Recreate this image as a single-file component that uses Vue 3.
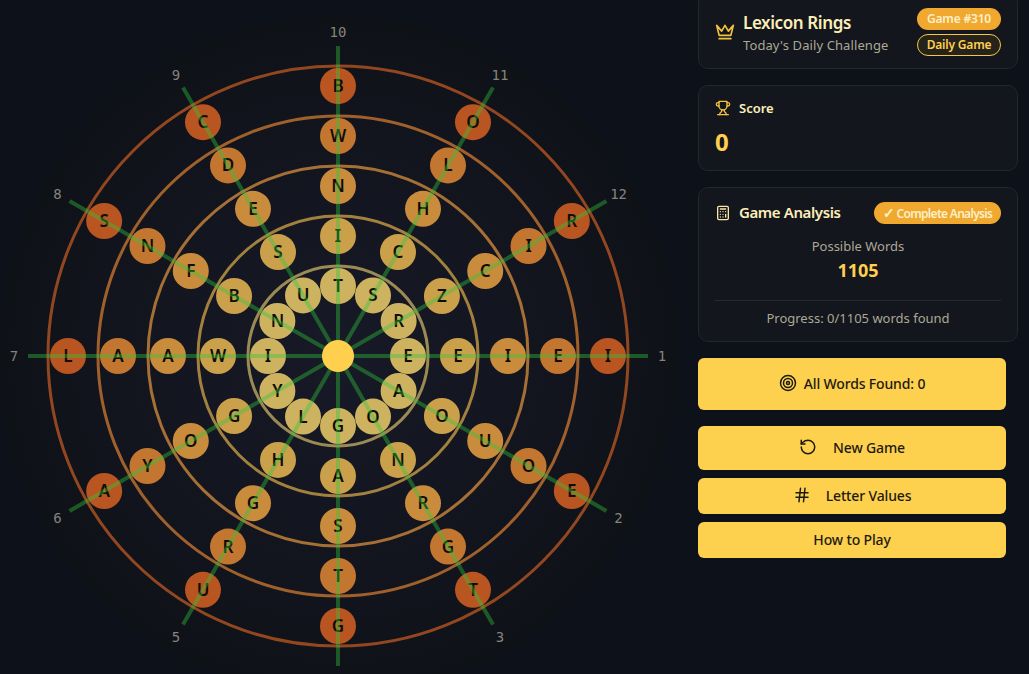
<template>
  <div class="page">
    <svg class="wheel" width="680" height="680" viewBox="-340 -340 680 680">
      <defs>
        <radialGradient id="discFill">
          <stop offset="0%" stop-color="#171a27" />
          <stop offset="75%" stop-color="#11141c" />
          <stop offset="100%" stop-color="#0e1116" />
        </radialGradient>
      </defs>
      <circle r="340" fill="url(#discFill)" />
      <circle
        v-for="ring in rings"
        :key="ring.r"
        :r="ring.r + 20"
        fill="none"
        :stroke="ring.stroke"
        stroke-width="3"
      />
      <g v-for="cell in cells" :key="cell.id">
        <circle :cx="cell.x" :cy="cell.y" r="18" :fill="cell.fill" />
        <text :x="cell.x" :y="cell.y + 6" class="letter" text-anchor="middle">{{ cell.ch }}</text>
      </g>
      <line
        v-for="spoke in spokes"
        :key="spoke.n"
        x1="0"
        y1="0"
        :x2="spoke.x"
        :y2="spoke.y"
        class="spoke"
      />
      <text
        v-for="spoke in labelled"
        :key="'n' + spoke.n"
        :x="spoke.lx"
        :y="spoke.ly + 5"
        class="num"
        text-anchor="middle"
      >{{ spoke.n }}</text>
      <circle r="16" fill="#ffd04d" />
    </svg>

    <div class="side">
      <div class="card head">
        <svg class="ico crown" viewBox="0 0 24 24"><path d="m2 4 3 12h14l3-12-6 7-4-7-4 7-6-7zm3 16h14" /></svg>
        <div class="head-text">
          <div class="title">Lexicon Rings</div>
          <div class="sub">Today's Daily Challenge</div>
        </div>
        <div class="badges">
          <span class="badge solid">Game #310</span>
          <span class="badge outline">Daily Game</span>
        </div>
      </div>

      <div class="card score">
        <div class="row">
          <svg class="ico small" viewBox="0 0 24 24">
            <path d="M6 9H4.5a2.5 2.5 0 0 1 0-5H6" />
            <path d="M18 9h1.5a2.5 2.5 0 0 0 0-5H18" />
            <path d="M4 22h16" />
            <path d="M10 14.66V17c0 .55-.47.98-.97 1.21C7.85 18.75 7 20.24 7 22" />
            <path d="M14 14.66V17c0 .55.47.98.97 1.21C16.15 18.75 17 20.24 17 22" />
            <path d="M18 2H6v7a6 6 0 0 0 12 0V2Z" />
          </svg>
          <span class="score-label">Score</span>
        </div>
        <div class="score-value">0</div>
      </div>

      <div class="card analysis">
        <div class="row between">
          <div class="row">
            <svg class="ico small pale" viewBox="0 0 24 24">
              <rect x="4" y="2" width="16" height="20" rx="2" />
              <path d="M8 6h8M16 14v4M16 10h.01M12 10h.01M8 10h.01M12 14h.01M8 14h.01M12 18h.01M8 18h.01" />
            </svg>
            <span class="analysis-title">Game Analysis</span>
          </div>
          <span class="badge solid wide"><b class="tick">✓</b> Complete Analysis</span>
        </div>
        <div class="possible">Possible Words</div>
        <div class="possible-num">1105</div>
        <div class="progress">Progress: 0/1105 words found</div>
      </div>

      <button class="btn found">
        <svg class="ico dark" viewBox="0 0 24 24">
          <circle cx="12" cy="12" r="10" /><circle cx="12" cy="12" r="6" /><circle cx="12" cy="12" r="2" />
        </svg>
        <span>All Words Found: 0</span>
      </button>
      <div class="actions">
        <button class="btn tall">
          <svg class="ico dark" viewBox="0 0 24 24">
            <path d="M3 12a9 9 0 1 0 9-9 9.75 9.75 0 0 0-6.74 2.74L3 8" /><path d="M3 3v5h5" />
          </svg>
          <span>New Game</span>
        </button>
        <button class="btn short">
          <svg class="ico dark" viewBox="0 0 24 24">
            <path d="M4 9h16M4 15h16M10 3 8 21M16 3l-2 18" />
          </svg>
          <span>Letter Values</span>
        </button>
        <button class="btn short">How to Play</button>
      </div>
    </div>
  </div>
</template>

<script setup>
// letters per spoke, inner ring first; spoke 1 points east and they go clockwise
const words = [
  'EEIEI', 'AOUOE', 'ONRGT', 'GASTG', 'LHGRU', 'YGOYA',
  'IWAAL', 'NBFNS', 'USEDC', 'TINWB', 'SCHLO', 'RZCIR',
]

const rings = [
  { r: 70, fill: '#cdb35f', stroke: '#9c8a55' },
  { r: 120, fill: '#cba04b', stroke: '#a2813f' },
  { r: 170, fill: '#c98c3c', stroke: '#a56f36' },
  { r: 220, fill: '#c37630', stroke: '#a0602c' },
  { r: 270, fill: '#b95520', stroke: '#934720' },
]

const polar = (r, i) => {
  const a = (i * Math.PI) / 6
  return { x: r * Math.cos(a), y: r * Math.sin(a) }
}

const spokes = words.map((_, i) => {
  const end = polar(310, i)
  const lab = polar(324, i)
  return { n: i + 1, x: end.x, y: end.y, lx: lab.x, ly: lab.y }
})

// the label of spoke 4 falls below the visible page
const labelled = spokes.filter((s) => s.n !== 4)

const cells = words.flatMap((word, i) =>
  rings.map((ring, j) => ({
    id: i + '-' + j,
    ch: word[j],
    fill: ring.fill,
    ...polar(ring.r, i),
  }))
)
</script>

<style scoped>
.page {
  display: flex;
  align-items: flex-start;
  width: 1029px;
  height: 674px;
  overflow: hidden;
  background: #0d1119;
  font-family: "Noto Sans", "Open Sans", sans-serif;
}

.wheel {
  flex: none;
  margin: 16px 0 0 -2px;
}

.letter {
  font-family: "Noto Sans", sans-serif;
  font-size: 17px;
  font-weight: 600;
  fill: #0e0d08;
}

.spoke {
  stroke: #32c63c;
  stroke-width: 4;
  stroke-opacity: 0.4;
}

.num {
  font-family: "DejaVu Sans Mono", monospace;
  font-size: 14px;
  fill: #85847c;
}

.side {
  flex: none;
  width: 320px;
  margin: -8px 0 0 20px;
}

.card {
  box-sizing: border-box;
  width: 320px;
  background: #13161d;
  border: 1px solid #23262e;
  border-radius: 10px;
  padding: 16px;
  margin-bottom: 16px;
}

.row {
  display: flex;
  align-items: center;
  gap: 8px;
}

.between {
  justify-content: space-between;
}

.ico {
  flex: none;
  width: 16px;
  height: 16px;
  fill: none;
  stroke: currentColor;
  stroke-width: 2;
  stroke-linecap: round;
  stroke-linejoin: round;
  color: #f5c23c;
}

.ico.pale {
  color: #fbe6a8;
}

.ico.dark {
  width: 18px;
  height: 18px;
  color: #1d1a12;
}

.head {
  height: 77px;
  display: flex;
  align-items: center;
  padding-top: 15px;
  padding-bottom: 12px;
}

.crown {
  width: 20px;
  height: 20px;
  margin-right: 8px;
}

.head-text {
  flex: 1;
  margin-top: 2px;
}

.title {
  font-size: 17px;
  line-height: 23px;
  font-weight: 600;
  letter-spacing: -0.4px;
  color: #fdeeb8;
}

.sub {
  margin-top: 1px;
  font-size: 13px;
  line-height: 21px;
  letter-spacing: 0.1px;
  color: #ada894;
}

.badges {
  display: flex;
  flex-direction: column;
  gap: 4px;
}

.badge {
  box-sizing: border-box;
  display: block;
  width: 84px;
  height: 22px;
  line-height: 20px;
  border-radius: 11px;
  text-align: center;
  font-size: 12px;
  font-weight: 600;
  letter-spacing: -0.2px;
}

.solid {
  background: #f0a92e;
  color: #fdf0c8;
  line-height: 22px;
}

.outline {
  background: #26231d;
  border: 1px solid #f5c842;
  color: #ffd04d;
}

.wide {
  width: 127px;
  letter-spacing: -0.7px;
}

.tick {
  font-size: 14px;
  font-weight: 700;
}

.score {
  height: 86px;
  padding-top: 13px;
}

.score-label {
  font-size: 13px;
  font-weight: 600;
  color: #fdeeb8;
}

.score-value {
  margin-top: 9px;
  font-size: 24px;
  line-height: 32px;
  font-weight: 700;
  color: #ffd04d;
}

.analysis {
  height: 155px;
  padding-top: 14px;
  text-align: center;
}

.analysis-title {
  padding-bottom: 2px;
  font-size: 15px;
  font-weight: 600;
  letter-spacing: -0.4px;
  color: #fdeeb8;
}

.possible {
  margin-top: 12px;
  font-size: 13px;
  line-height: 20px;
  color: #ada894;
}

.possible-num {
  margin-top: 2px;
  font-size: 18px;
  line-height: 25px;
  font-weight: 700;
  color: #ffd04d;
}

.progress {
  margin-top: 17px;
  padding-top: 7px;
  border-top: 1px solid #262931;
  font-size: 13px;
  line-height: 20px;
  color: #ada894;
}

.btn {
  box-sizing: border-box;
  width: 308px;
  display: flex;
  align-items: center;
  justify-content: center;
  border: none;
  border-radius: 6px;
  padding: 0 0 2px;
  background: #fdd04e;
  color: #1d1a12;
  font-family: inherit;
  font-size: 14px;
  font-weight: 500;
  letter-spacing: -0.15px;
}

.found {
  height: 52px;
  gap: 7px;
}

.actions {
  display: flex;
  flex-direction: column;
  gap: 8px;
  margin-top: 16px;
}

.tall {
  height: 44px;
  gap: 16px;
}

.short {
  height: 36px;
  gap: 15px;
}
</style>

<style>
html,
body {
  background: #0d1119;
  overflow: hidden;
}
</style>
